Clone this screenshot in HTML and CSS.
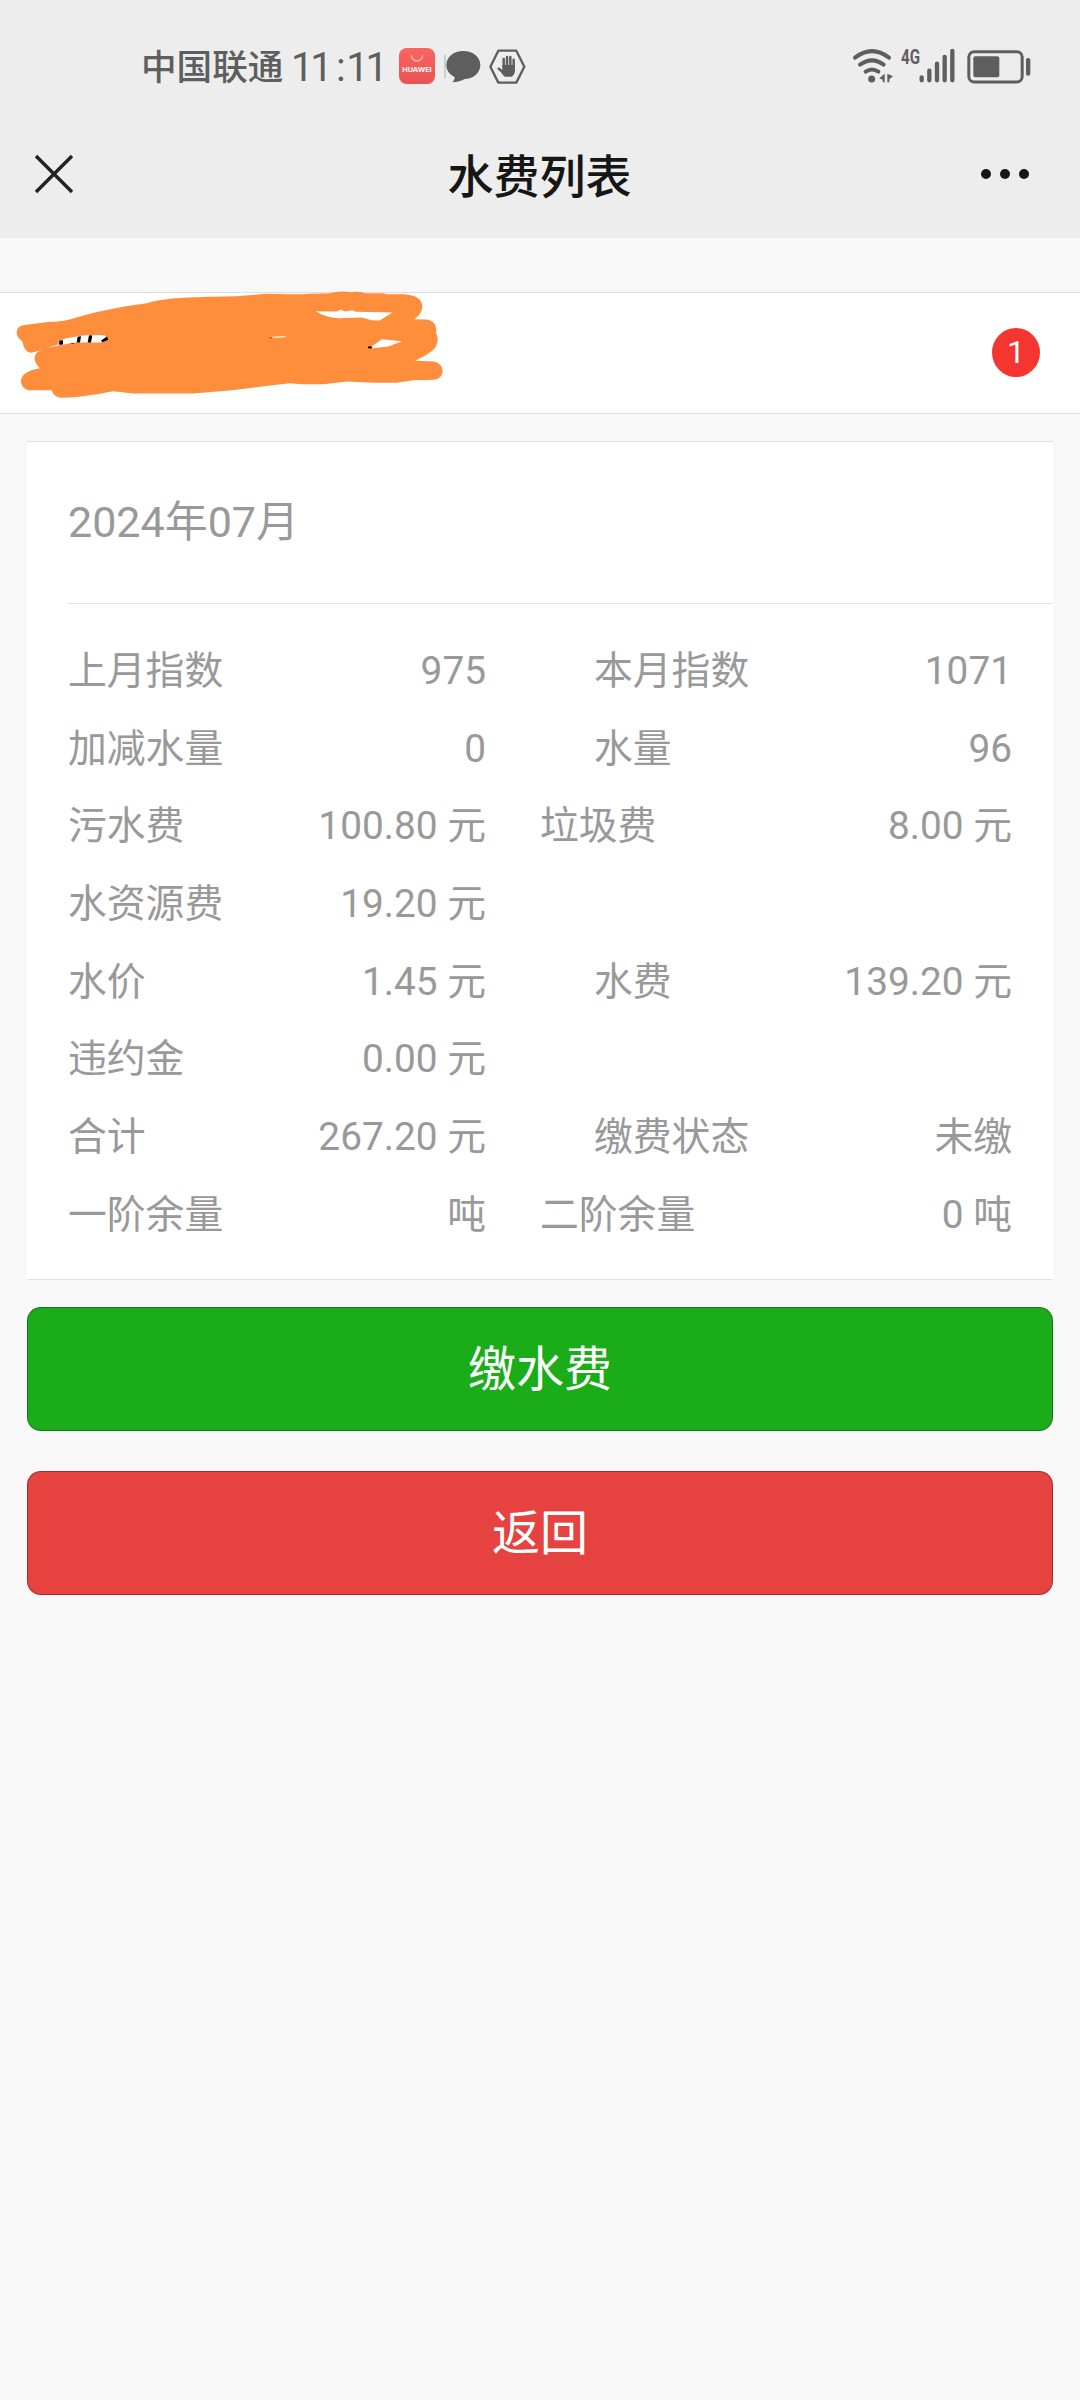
FILE: index.html
```html
<!DOCTYPE html>
<html lang="zh-CN">
<head>
<meta charset="utf-8">
<title>水费列表</title>
<link rel="stylesheet" href="styles.css">
</head>
<body>
<header class="top">
  <div class="status">
    <span class="carrier">中国联通</span>
    <span class="clock">11<span class="colon">:</span>11</span>
    <svg class="app" viewBox="0 0 108 108">
      <defs><linearGradient id="red" x1="0" y1="0" x2="0" y2="1"><stop offset="0" stop-color="#f9655f"/><stop offset="1" stop-color="#ea5256"/></linearGradient></defs>
      <rect width="108" height="108" rx="23" fill="url(#red)"/>
      <path d="M37 22a17 17 0 0 0 34 0" fill="none" stroke="#ffb9b0" stroke-width="4"/>
      <text x="54" y="71" text-anchor="middle" textLength="88" lengthAdjust="spacingAndGlyphs" class="brand">HUAWEI</text>
    </svg>
    <svg class="chat" viewBox="971 57 110 100">
      <path d="M974 71V143" stroke="#6f9c8f" stroke-width="2"/>
      <path d="M1029 60c29 0 51 18 51 42s-22 42-47 42c-9 5-22 9-37 10 4-4 7-10 7-16-16-8-25-20-25-36 0-24 22-42 51-42z" fill="#5e5e5e"/>
    </svg>
    <svg class="hand" viewBox="1107 53 110 106">
      <path d="M1135 58H1189L1213 106L1189 154H1135L1111 106Z" fill="none" stroke="#5e5e5e" stroke-width="7" stroke-linejoin="round"/>
      <path d="M1151 83V108M1161 77V108M1171 77V108M1181 85V108M1136 112L1150 124" stroke="#5e5e5e" stroke-width="7.5" stroke-linecap="round"/>
      <path d="M1147 101H1185V119Q1183 132 1175 136H1155Q1148 133 1143 122L1136 113L1147 115Z" fill="#5e5e5e"/>
    </svg>
    <svg class="signals" viewBox="65 50 540 110">
      <g fill="none" stroke="#5e5e5e" stroke-width="12" stroke-linecap="round">
        <path d="M74 79Q125 40 176 79M89 100Q125 74 160 100M106 121Q125 108 144 121"/>
        <path d="M274 138V147M297 118V147M320 97V147M343 77V147M366 59V147" stroke-width="13"/>
      </g>
      <circle cx="124" cy="143" r="10.500" fill="#5e5e5e"/>
      <path d="M163 127V153H157V145L147 141ZM171 127L188 135L177 144V153H171Z" fill="#5e5e5e"/>
      <text x="212" y="98" textLength="57" lengthAdjust="spacingAndGlyphs" class="net">4G</text>
      <rect x="415.500" y="61" width="160" height="91" rx="16" fill="none" stroke="#5e5e5e" stroke-width="9"/>
      <rect x="429" y="75" width="78" height="63" rx="6" fill="#5e5e5e"/>
      <rect x="587" y="80" width="13" height="53" rx="6" fill="#5e5e5e"/>
    </svg>
  </div>
  <div class="nav">
    <svg class="close" viewBox="0 0 40 40"><path d="M2 2L38 38M38 2L2 38" stroke="#222" stroke-width="3.400"/></svg>
    <h1 class="title">水费列表</h1>
    <svg class="more" viewBox="0 0 50 12"><g fill="#161616"><circle cx="6" cy="6" r="5"/><circle cx="25" cy="6" r="5"/><circle cx="44" cy="6" r="5"/></g></svg>
  </div>
</header>
<main>
  <section class="account">
    <svg class="scribble" viewBox="0 67.500 1410 366">
      <path fill="#ff8e3c" d="M50 190C50 174 62 167 78 166L150 157C185 156 200 153 230 144C300 122 370 111 440 101C500 85 550 84 640 82C700 82 750 78 800 73C850 74 890 76 930 73L990 71Q1020 63 1050 68Q1075 64 1095 71H1150L1160 74H1210C1250 76 1267 90 1267 112C1265 130 1255 142 1242 149L1280 150C1302 154 1311 166 1308 190C1315 202 1315 222 1304 237C1290 251 1270 262 1245 274L1300 276C1320 280 1328 292 1328 305C1327 321 1315 331 1297 331L1240 332L1190 340H1120L1040 336L970 344H905L870 341C800 347 730 360 660 365L580 372H400L340 365C290 374 250 382 185 385C168 383 157 374 156 362H85C69 357 62 345 63 332C66 312 88 301 119 296C105 282 100 266 107 254C113 244 130 240 145 236L95 250C80 250 71 238 68 217C57 208 50 201 50 190Z"/>
      <path fill="#fff" d="M947 125L1010 126L1022 120L1035 126L1058 122L1068 127L1178 129L1139 153L1115 152L1085 144L1018 146C990 144 970 139 947 125ZM176 214Q192 207 230 201Q260 196 313 197L325 207L303 219H222L150 233Q140 236 145 234L176 224ZM1105 238L1146 209L1206 215L1165 231Z"/>
      <path fill="#ffd9b8" d="M812 202L862 199L850 205L818 206Z"/>
      <path fill="#000" d="M178 213L189 212V225L177 226ZM233 202L243 200L240 219H230ZM267 197L277 198L273 219H263ZM303 213L321 201L325 211L307 218ZM212 221H222V223H213ZM1105 230L1118 232L1113 238L1104 236Z"/>
      <path fill="#8a4a1c" d="M808 203H817V206H809Z"/>
    </svg>
    <span class="badge">1</span>
  </section>
  <section class="card">
    <h2 class="month">2024年07月</h2>
    <div class="rows">
      <div class="row"><p class="item"><span>上月指数</span><span>975</span></p><p class="item indent"><span>本月指数</span><span>1071</span></p></div>
      <div class="row"><p class="item"><span>加减水量</span><span>0</span></p><p class="item indent"><span>水量</span><span>96</span></p></div>
      <div class="row"><p class="item"><span>污水费</span><span>100.80 元</span></p><p class="item"><span>垃圾费</span><span>8.00 元</span></p></div>
      <div class="row"><p class="item"><span>水资源费</span><span>19.20 元</span></p></div>
      <div class="row"><p class="item"><span>水价</span><span>1.45 元</span></p><p class="item indent"><span>水费</span><span>139.20 元</span></p></div>
      <div class="row"><p class="item"><span>违约金</span><span>0.00 元</span></p></div>
      <div class="row"><p class="item"><span>合计</span><span>267.20 元</span></p><p class="item indent"><span>缴费状态</span><span>未缴</span></p></div>
      <div class="row"><p class="item"><span>一阶余量</span><span>吨</span></p><p class="item"><span>二阶余量</span><span>0 吨</span></p></div>
    </div>
  </section>
  <div class="actions">
    <button class="btn pay">缴水费</button>
    <button class="btn back">返回</button>
  </div>
</main>
</body>
</html>
```
FILE: styles.css
```css
* { box-sizing: border-box; margin: 0; padding: 0; }
body {
  background: #f8f8f8;
  font-family: Roboto, "Noto Sans CJK SC", sans-serif;
  min-height: 2400px;
}
svg { display: block; flex: none; overflow: visible; }

.top { height: 238px; background: #ededed; }
.status {
  height: 108px;
  padding: 28px 48px 0 141px;
  display: flex;
  align-items: center;
  color: #5e5e5e;
  line-height: 80px;
}
.carrier { width: 150px; font-size: 35.6px; font-weight: 500; white-space: nowrap; }
.clock { width: 108px; font-size: 40px; letter-spacing: -3.2px; white-space: nowrap; }
.colon { margin-left: 6.5px; letter-spacing: 0.5px; }
.app { width: 36px; height: 36px; margin-top: -5px; }
.chat { width: 36.7px; height: 33.3px; margin-left: 9px; margin-top: -3px; }
.hand { width: 36.7px; height: 35.3px; margin-left: 8.6px; margin-top: -3px; }
.signals { width: 180px; height: 36.7px; margin-left: auto; margin-top: -3px; }
.brand { font: 700 19px Inter, sans-serif; fill: #fff; }
.net { font: 700 60px Roboto, sans-serif; fill: #5e5e5e; }

.nav {
  height: 130px;
  padding: 1px 50px 0 34px;
  display: flex;
  align-items: center;
  justify-content: space-between;
}
.close { width: 40px; height: 40px; }
.title { font-size: 46px; font-weight: 500; color: #161616; line-height: 80px; padding-top: 6px; margin-left: 25px; }
.more { width: 50px; height: 12px; }

.account {
  height: 122px;
  margin-top: 54px;
  padding-right: 40px;
  display: flex;
  align-items: center;
  justify-content: space-between;
  background: #fff;
  border-top: 1px solid #dedede;
  border-bottom: 1px solid #dedede;
}
.scribble { width: 470px; height: 122px; }
.badge {
  width: 48px;
  height: 49px;
  margin-bottom: 2px;
  border-radius: 50%;
  background: #f53530;
  color: #fff;
  font-size: 32px;
  line-height: 49px;
  text-align: center;
}

.card {
  margin: 27px 27px 0;
  background: #fff;
  color: #999;
  border-top: 1px solid #dedede;
  border-bottom: 1px solid #e2e2e2;
  height: 839px;
}
.month {
  margin-left: 41px;
  height: 162px;
  line-height: 161px;
  font-size: 43px;
  font-weight: 400;
  border-bottom: 1px solid #e5e5e5;
}
.rows { padding: 28px 41px 0; }
.row {
  display: grid;
  grid-template-columns: 418px 472px;
  column-gap: 54px;
  height: 77.7px;
  line-height: 77.7px;
  font-size: 38.8px;
}
.item { display: flex; justify-content: space-between; white-space: nowrap; }
.indent { padding-left: 54px; }

.actions { margin: 27px 27px 0; display: flex; flex-direction: column; gap: 40px; }
.btn {
  height: 124px;
  padding-top: 1px;
  border: 1px solid rgba(0, 0, 0, .3);
  border-radius: 14px;
  color: #fff;
  font: 400 48px/121px Roboto, "Noto Sans CJK SC", sans-serif;
}
.pay { background: #1aad19; }
.back { background: #e64340; }
```
